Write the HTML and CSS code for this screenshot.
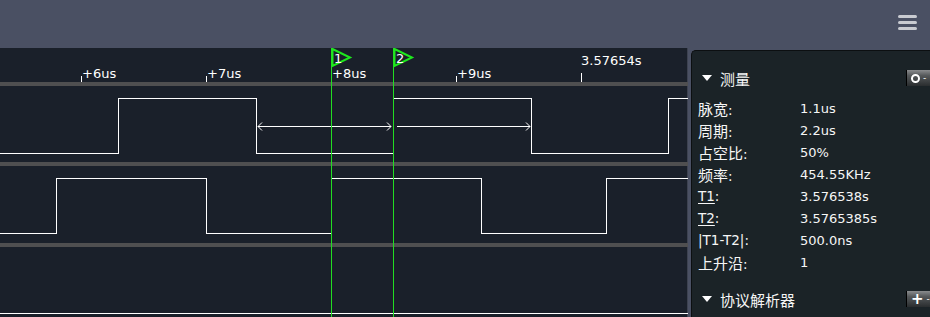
FILE: index.html
```html
<!DOCTYPE html>
<html>
<head>
  <meta charset="utf-8">
  <link rel="stylesheet" href="styles.css">
</head>
<body>
  <div class="topbar">
    <div class="menu-btn">
      <span></span><span></span><span></span>
    </div>
  </div>

  <div class="main">
    <div class="wave-view">
      <svg class="wave-svg" width="688" height="269" viewBox="0 48 688 269">
        <!-- ruler -->
        <g class="ticks">
          <line x1="81.5" y1="76" x2="81.5" y2="82"/>
          <line x1="206.5" y1="76" x2="206.5" y2="82"/>
          <line x1="456.5" y1="76" x2="456.5" y2="82"/>
          <line x1="581.5" y1="73" x2="581.5" y2="82"/>
        </g>
        <g class="ruler-text">
          <text x="82" y="78">+6us</text>
          <text x="207" y="78">+7us</text>
          <text x="332" y="78">+8us</text>
          <text x="457" y="78">+9us</text>
          <text x="581" y="65">3.57654s</text>
        </g>

        <!-- channel separators -->
        <rect class="sep" x="0" y="82" width="688" height="4"/>
        <rect class="sep" x="0" y="162" width="688" height="4"/>
        <rect class="sep" x="0" y="243" width="688" height="4"/>

        <!-- signals -->
        <polyline class="sig" points="0,153.5 118.5,153.5 118.5,98.5 256.5,98.5 256.5,153.5 393.5,153.5 393.5,98.5 531.5,98.5 531.5,153.5 668.5,153.5 668.5,98.5 688,98.5"/>
        <polyline class="sig" points="0,233.5 56.5,233.5 56.5,178.5 206.5,178.5 206.5,233.5 331.5,233.5 331.5,178.5 481.5,178.5 481.5,233.5 606.5,233.5 606.5,178.5 688,178.5"/>
        <line class="sig" x1="0" y1="313.5" x2="688" y2="313.5"/>

        <!-- width arrows -->
        <g class="arrow">
          <line x1="258" y1="126.5" x2="391" y2="126.5"/>
          <polyline points="262,122.5 258,126.5 262,130.5"/>
          <polyline points="387,122.5 391,126.5 387,130.5"/>
          <line x1="397" y1="126.5" x2="530" y2="126.5"/>
          <polyline points="526,122.5 530,126.5 526,130.5"/>
        </g>

        <!-- cursors -->
        <g class="cursor">
          <line x1="331.5" y1="48" x2="331.5" y2="317"/>
          <polygon points="332.5,49 350,57.5 332.5,66"/>
          <line x1="393.5" y1="48" x2="393.5" y2="317"/>
          <polygon points="394.5,49 412,57.5 394.5,66"/>
        </g>
        <g class="cursor-text">
          <text x="334" y="63">1</text>
          <text x="396" y="63">2</text>
        </g>
      </svg>
    </div>

    <div class="panel">
      <div class="section-head">
        <span class="caret"></span>
        <span class="head-title">测量</span>
        <span class="tool-btn">
          <span class="ring"></span><span class="drop">-</span>
        </span>
      </div>

      <div class="rows">
        <div class="row"><span class="label"><span class="cjk">脉宽</span>:</span><span class="value">1.1us</span></div>
        <div class="row"><span class="label"><span class="cjk">周期</span>:</span><span class="value">2.2us</span></div>
        <div class="row"><span class="label"><span class="cjk">占空比</span>:</span><span class="value">50%</span></div>
        <div class="row"><span class="label"><span class="cjk">频率</span>:</span><span class="value">454.55KHz</span></div>
        <div class="row"><span class="label"><u>T1</u>:</span><span class="value">3.576538s</span></div>
        <div class="row"><span class="label"><u>T2</u>:</span><span class="value">3.5765385s</span></div>
        <div class="row"><span class="label">|T1-T2|:</span><span class="value">500.0ns</span></div>
        <div class="row"><span class="label"><span class="cjk">上升沿</span>:</span><span class="value">1</span></div>
      </div>

      <div class="section-head second">
        <span class="caret"></span>
        <span class="head-title">协议解析器</span>
        <span class="tool-btn">
          <span class="plus">+</span><span class="drop">-</span>
        </span>
      </div>
    </div>
  </div>
</body>
</html>
```

FILE: styles.css
```css
* {
  margin: 0;
  padding: 0;
  box-sizing: border-box;
}

body {
  width: 930px;
  height: 317px;
  background: #4a5063;
  color: #f6f6f6;
  font-family: 'DejaVu Sans', 'Noto Sans CJK SC', sans-serif;
  overflow: hidden;
}

.topbar {
  height: 48px;
  display: flex;
  justify-content: flex-end;
  align-items: flex-start;
}

.menu-btn {
  width: 19px;
  margin: 15px 13px 0 0;
  display: flex;
  flex-direction: column;
  gap: 3px;
}

.menu-btn span {
  display: block;
  height: 3px;
  border-radius: 2px;
  background: #c9cbd1;
}

.main {
  display: flex;
  height: 269px;
}

.wave-view {
  width: 688px;
  height: 269px;
  background: #1a202a;
  border-right: 1px solid #3d4250;
}

.wave-svg {
  display: block;
}

.ticks line {
  stroke: #ffffff;
  stroke-width: 1;
}

.ruler-text text,
.cursor-text text {
  fill: #ffffff;
  font-family: 'DejaVu Sans', sans-serif;
  font-size: 13px;
}

.sep {
  fill: #4f4f50;
}

.sig {
  fill: none;
  stroke: #ffffff;
  stroke-width: 1;
  shape-rendering: crispEdges;
}

.arrow line,
.arrow polyline {
  fill: none;
  stroke: #ffffff;
  stroke-width: 1;
}

.cursor line {
  stroke: #22dd22;
  stroke-width: 1;
  shape-rendering: crispEdges;
}

.cursor polygon {
  fill: none;
  stroke: #1ee81e;
  stroke-width: 2;
}

.panel {
  flex: 1;
  margin: 2px 0 0 3px;
  background: #1b2327;
  border-top: 1px solid #0c0f11;
  border-left: 1px solid #0c0f11;
  border-radius: 5px 0 0 0;
  padding-top: 17px;
  overflow: hidden;
}

.section-head {
  display: flex;
  align-items: center;
  height: 20px;
  padding-left: 10px;
}

.section-head.second {
  margin-top: 16px;
}

.caret {
  width: 0;
  height: 0;
  border-left: 5px solid transparent;
  border-right: 5px solid transparent;
  border-top: 6px solid #ffffff;
  margin-right: 8px;
}

.head-title {
  font-family: 'Noto Sans CJK SC', sans-serif;
  font-size: 15px;
  color: #f6f6f6;
}

.tool-btn {
  margin-left: auto;
  width: 28px;
  height: 16px;
  margin-right: -4px;
  display: flex;
  align-items: center;
  padding-left: 4px;
  gap: 3px;
  border-left: 1px solid #000;
  background: linear-gradient(#8a8c8e 0%, #55585a 35%, #2a2d2f 100%);
  color: #ffffff;
}

.ring {
  width: 9px;
  height: 9px;
  border: 2px solid #ffffff;
  border-radius: 50%;
}

.plus {
  font-size: 15px;
  font-weight: bold;
  line-height: 14px;
}

.drop {
  font-size: 9px;
  line-height: 10px;
}

.rows {
  margin-top: 9px;
}

.row {
  display: flex;
  align-items: center;
  height: 22px;
  padding-left: 6px;
  font-size: 13px;
}

.label {
  width: 102px;
  font-size: 13.5px;
}

.cjk {
  font-family: 'Noto Sans CJK SC', sans-serif;
  font-size: 15px;
}

.label u {
  text-underline-offset: 2px;
}

.value {
  font-family: 'DejaVu Sans', sans-serif;
}
```
